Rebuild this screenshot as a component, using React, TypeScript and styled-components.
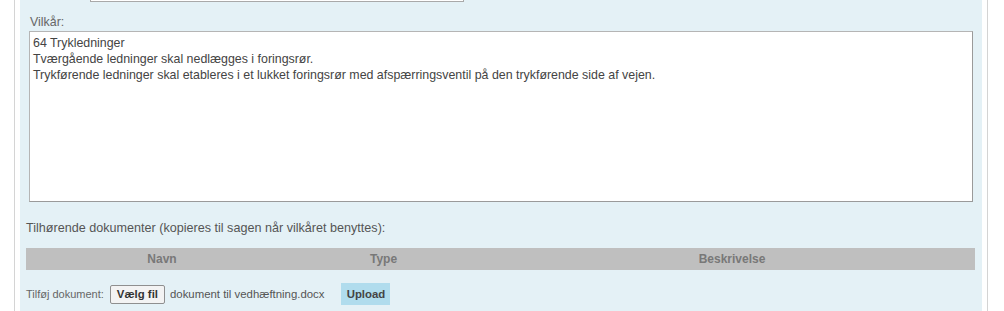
import React, { FC } from 'react'
import styled, { createGlobalStyle } from 'styled-components'

const GlobalStyle = createGlobalStyle`
    html, body {
        margin: 0;
        padding: 0;
        background: #fff;
        overflow: hidden;
    }
    body {
        font-family: "Liberation Sans", Arial, sans-serif;
        font-size: 12px;
        color: #333;
    }
`

const Page = styled.div`
    margin: -19px 0 0 14px;
    width: 974px;
    height: 340px;
    border-left: 1px solid #d4d4d4;
    border-right: 1px solid #d4d4d4;
    padding: 0 5px;
    box-sizing: border-box;
`

const Panel = styled.div`
    background: #e4f1f6;
    height: 100%;
    padding: 0 6px;
    box-sizing: border-box;
`

const TopRow = styled.div`
    padding-left: 64px;
`

const TopInput = styled.div`
    width: 372px;
    height: 20px;
    background: #fff;
    border: 1px solid #a9a9a9;
    border-top: none;
`

const Label = styled.div<{ $indent?: number }>`
    color: #666;
    font-size: 12.4px;
    line-height: 14px;
    padding-left: ${p => p.$indent ?? 0}px;
`

const TermsLabel = styled(Label)`
    margin-top: 13px;
`

const TermsBox = styled.div`
    margin: 2px 0 0 3px;
    width: 944px;
    height: 171px;
    box-sizing: border-box;
    background: #fff;
    border: 1px solid #b5b5b5;
    border-right-color: #9a9a9a;
    border-bottom-color: #9a9a9a;
    padding: 3px 3px;
    color: #444;
    font-size: 12.4px;
    line-height: 16px;
    white-space: pre-line;
`

const DocsTitle = styled(Label)`
    color: #555;
    margin-top: 19px;
    font-size: 12.6px;
`

const TableHead = styled.div`
    margin-top: 13px;
    width: 949px;
    height: 22px;
    background: #bfbfbf;
    display: grid;
    grid-template-columns: 272px 171px 1fr;
    align-items: center;
    font-weight: bold;
    color: #787878;
`

const HeadCell = styled.div<{ $shift?: number }>`
    text-align: center;
    padding-left: ${p => p.$shift ?? 0}px;
`

const UploadRow = styled.div`
    margin-top: 13px;
    display: flex;
    align-items: center;
    color: #666;
    font-size: 11px;
`

const FileButton = styled.button`
    margin-left: 6px;
    height: 19px;
    padding: 0 6px;
    font-family: inherit;
    font-size: 11.4px;
    font-weight: bold;
    color: #333;
    background: #f3f3f3;
    border: 1px solid #8f8f8f;
    border-radius: 2px;
`

const FileName = styled.span`
    margin-left: 5px;
    color: #555;
    font-size: 11.4px;
`

const UploadButton = styled.button`
    margin-left: 17px;
    height: 22px;
    width: 49px;
    padding: 0;
    font-family: inherit;
    font-size: 11.4px;
    font-weight: bold;
    color: #444;
    background: #b0dced;
    border: none;
`

const terms = `64 Trykledninger
Tværgående ledninger skal nedlægges i foringsrør.
Trykførende ledninger skal etableres i et lukket foringsrør med afspærringsventil på den trykførende side af vejen.`

const App: FC = () => {
    return (
        <>
            <GlobalStyle />
            <Page>
                <Panel>
                    <TopRow>
                        <TopInput />
                    </TopRow>
                    <TermsLabel $indent={4}>Vilkår:</TermsLabel>
                    <TermsBox>{terms}</TermsBox>
                    <DocsTitle>Tilhørende dokumenter (kopieres til sagen når vilkåret benyttes):</DocsTitle>
                    <TableHead>
                        <HeadCell>Navn</HeadCell>
                        <HeadCell>Type</HeadCell>
                        <HeadCell $shift={20}>Beskrivelse</HeadCell>
                    </TableHead>
                    <UploadRow>
                        Tilføj dokument:
                        <FileButton>Vælg fil</FileButton>
                        <FileName>dokument til vedhæftning.docx</FileName>
                        <UploadButton>Upload</UploadButton>
                    </UploadRow>
                </Panel>
            </Page>
        </>
    )
}

export default App
